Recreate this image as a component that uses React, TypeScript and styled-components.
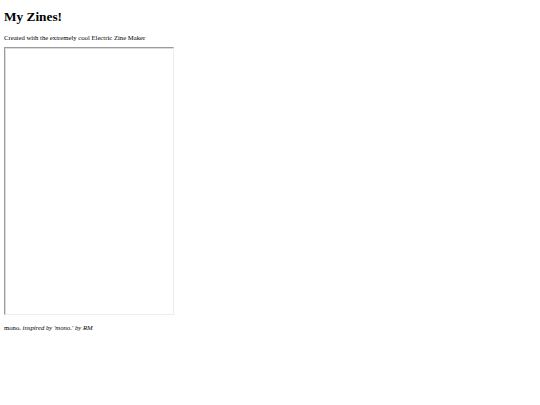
import React from "react";
import styled, { createGlobalStyle } from "styled-components";

const GlobalStyle = createGlobalStyle`
  html, body {
    margin: 0;
    padding: 0;
    background: #ffffff;
  }
  body {
    font-family: "Liberation Serif", "Times New Roman", serif;
    color: #000000;
  }
`;

const Page = styled.div`
  display: flex;
  flex-direction: column;
  align-items: flex-start;
  padding: 0 4px;
`;

const Title = styled.h1`
  margin: 9px 0 0;
  font-size: 13.3px;
  font-weight: bold;
  line-height: 16px;
`;

const Blurb = styled.p`
  margin: 8px 0 0;
  font-size: 6.7px;
  line-height: 9px;
`;

/* the embedded zine reader, drawn like a default iframe */
const Viewer = styled.div`
  margin-top: 5px;
  width: 170px;
  height: 268px;
  box-sizing: border-box;
  border: 1px solid #ececec;
  border-top-color: #9c9c9c;
  border-left-color: #9c9c9c;
  box-shadow: inset 1px 1px 0 #dcdcdc;
  background: #ffffff;
`;

const Footer = styled.p`
  margin: 8px 0 0;
  font-size: 6.7px;
  line-height: 9px;
`;

const Credit = styled.em`
  font-style: italic;
`;

export default function App() {
  return (
    <>
      <GlobalStyle />
      <Page>
        <Title>My Zines!</Title>
        <Blurb>Created with the extremely cool Electric Zine Maker</Blurb>
        <Viewer />
        <Footer>
          mono. <Credit>inspired by 'mono.' by RM</Credit>
        </Footer>
      </Page>
    </>
  );
}
